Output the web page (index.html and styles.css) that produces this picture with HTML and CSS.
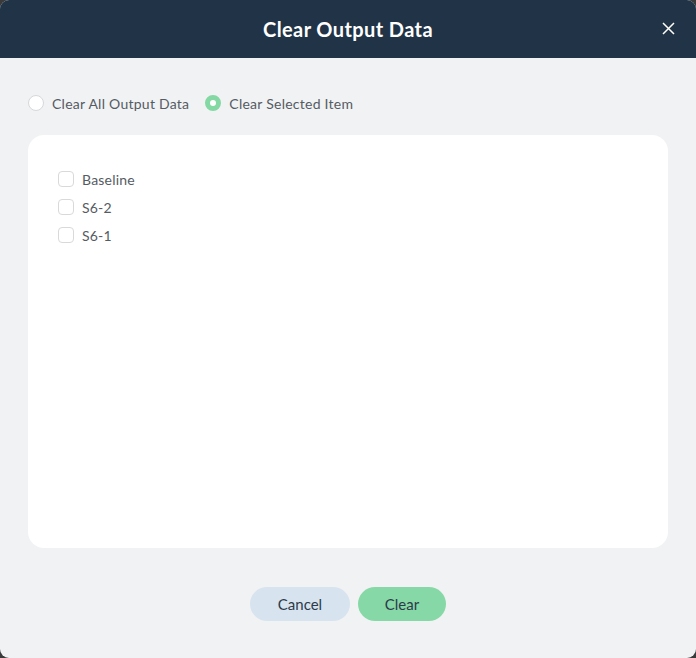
FILE: index.html
```html
<!DOCTYPE html>
<html lang="en">
<head>
    <meta charset="UTF-8">
    <title>Clear Output Data</title>
    <link rel="stylesheet" href="styles.css">
</head>
<body>
    <div class="dialog">
        <div class="dialog-header">
            <h1 class="dialog-title">Clear Output Data</h1>
            <button class="close-button" aria-label="Close">
                <svg width="13" height="13" viewBox="0 0 13 13">
                    <path d="M1 1 L12 12 M12 1 L1 12" stroke="#fff" stroke-width="1.5" fill="none"/>
                </svg>
            </button>
        </div>

        <div class="dialog-body">
            <div class="mode-row">
                <label class="radio">
                    <span class="radio-dot"></span>
                    Clear All Output Data
                </label>
                <label class="radio checked">
                    <span class="radio-dot"></span>
                    Clear Selected Item
                </label>
            </div>

            <div class="item-card">
                <label class="check"><span class="check-box"></span>Baseline</label>
                <label class="check"><span class="check-box"></span>S6-2</label>
                <label class="check"><span class="check-box"></span>S6-1</label>
            </div>

            <div class="actions">
                <button class="btn btn-cancel">Cancel</button>
                <button class="btn btn-clear">Clear</button>
            </div>
        </div>
    </div>
</body>
</html>
```

FILE: styles.css
```css
* {
    margin: 0;
    padding: 0;
    box-sizing: border-box;
}

body {
    font-family: Lato, "Noto Sans", sans-serif;
    background: #3a3a3a;
    width: 696px;
    height: 658px;
    overflow: hidden;
}

.dialog {
    width: 696px;
    height: 658px;
    border-radius: 9px;
    overflow: hidden;
    background: #f1f2f4;
    display: flex;
    flex-direction: column;
}

.dialog-header {
    height: 58px;
    background: #213346;
    display: flex;
    align-items: center;
    justify-content: center;
    position: relative;
}

.dialog-title {
    color: #fff;
    font-size: 20px;
    font-weight: 700;
    letter-spacing: 0.4px;
}

.close-button {
    position: absolute;
    right: 21px;
    top: 22px;
    background: none;
    border: none;
    width: 13px;
    height: 13px;
    display: flex;
    cursor: pointer;
}

.dialog-body {
    flex: 1;
    padding: 0 28px;
    display: flex;
    flex-direction: column;
}

.mode-row {
    display: flex;
    align-items: center;
    gap: 16px;
    height: 77px;
    padding-top: 13px;
}

.radio {
    display: flex;
    align-items: center;
    gap: 8px;
    font-size: 14px;
    letter-spacing: 0.25px;
    color: #555b63;
}

.radio-dot {
    width: 16px;
    height: 16px;
    border-radius: 50%;
    background: #fff;
    border: 1px solid #d6d8db;
}

.radio.checked .radio-dot {
    border: 5px solid #84d8a3;
}

.item-card {
    height: 413px;
    background: #fff;
    border-radius: 16px;
    padding: 35px 30px;
    display: flex;
    flex-direction: column;
    gap: 10px;
}

.check {
    display: flex;
    align-items: center;
    gap: 8px;
    font-size: 14px;
    letter-spacing: 0.2px;
    color: #555b63;
    height: 18px;
}

.check-box {
    width: 16px;
    height: 16px;
    border: 1px solid #d9d9d9;
    border-radius: 4px;
    background: #fff;
}

.actions {
    display: flex;
    justify-content: center;
    gap: 8px;
    padding-top: 39px;
}

.btn {
    height: 34px;
    border: none;
    border-radius: 17px;
    font-family: inherit;
    font-size: 15px;
    color: #2d3b4b;
    cursor: pointer;
}

.btn-cancel {
    width: 100px;
    background: #d7e3ee;
}

.btn-clear {
    width: 88px;
    background: #86d9a6;
}
```
